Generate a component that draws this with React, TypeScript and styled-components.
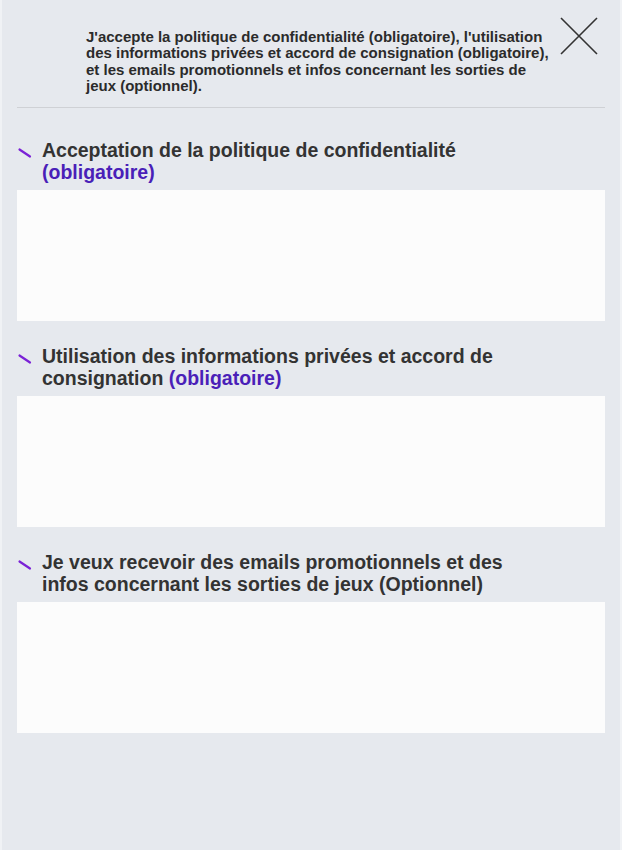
import React from "react";
import styled, { createGlobalStyle } from "styled-components";

const Global = createGlobalStyle`
  html, body { margin: 0; padding: 0; background: #f0f2f5; }
  body { font-family: "Liberation Sans", Arial, sans-serif; }
`;

const Panel = styled.div`
  margin: 0 2px;
  min-height: 850px;
  background: #e6e9ee;
  box-sizing: border-box;
  padding: 0 15px;
`;

const Header = styled.header`
  display: flex;
  align-items: flex-start;
  justify-content: space-between;
  padding: 29px 0 13px 69px;
  border-bottom: 1px solid #cfd1d5;
`;

const HeaderText = styled.p`
  margin: 0;
  font-size: 15px;
  line-height: 16.3px;
  font-weight: 700;
  color: #2b2b2b;
  max-width: 470px;
`;

const CloseButton = styled.button`
  flex: none;
  margin: -12px 7px 0 0;
  padding: 0;
  border: 0;
  background: transparent;
  width: 38px;
  height: 38px;
  cursor: pointer;
  svg { display: block; }
`;

const Section = styled.section`
  margin-top: 24px;
  &:first-of-type { margin-top: 31px; }
`;

const Heading = styled.h2`
  display: flex;
  align-items: flex-start;
  margin: 0 0 7px 0;
  font-size: 19.5px;
  line-height: 22px;
  font-weight: 700;
  color: #333333;
`;

const Mark = styled.span`
  flex: none;
  width: 25px;
  height: 22px;
  svg { display: block; }
`;

const HeadingText = styled.span`
  max-width: 472px;
`;

const Required = styled.span`
  color: #4a1fb8;
`;

const Box = styled.div`
  background: #fcfcfc;
  height: 131px;
`;

const Slash = () => (
  <svg width="16" height="22" viewBox="0 0 16 22">
    <line x1="2.5" y1="10.5" x2="13" y2="17.5" stroke="#7b22d6" strokeWidth="2.2" strokeLinecap="round" />
  </svg>
);

const items = [
  { text: "Acceptation de la politique de confidentialité ", req: "(obligatoire)" },
  { text: "Utilisation des informations privées et accord de consignation ", req: "(obligatoire)" },
  { text: "Je veux recevoir des emails promotionnels et des infos concernant les sorties de jeux (Optionnel)", req: "" },
];

export default function App() {
  return (
    <>
      <Global />
      <Panel>
        <Header>
          <HeaderText>
            J'accepte la politique de confidentialité (obligatoire), l'utilisation des informations privées et accord de consignation (obligatoire), et les emails promotionnels et infos concernant les sorties de jeux (optionnel).
          </HeaderText>
          <CloseButton aria-label="Fermer">
            <svg width="38" height="38" viewBox="0 0 38 38">
              <path d="M1 1 L37 37 M37 1 L1 37" stroke="#333" strokeWidth="1.6" fill="none" />
            </svg>
          </CloseButton>
        </Header>
        {items.map((it, i) => (
          <Section key={i}>
            <Heading>
              <Mark><Slash /></Mark>
              <HeadingText>
                {it.text}
                {it.req && <Required>{it.req}</Required>}
              </HeadingText>
            </Heading>
            <Box />
          </Section>
        ))}
      </Panel>
    </>
  );
}
